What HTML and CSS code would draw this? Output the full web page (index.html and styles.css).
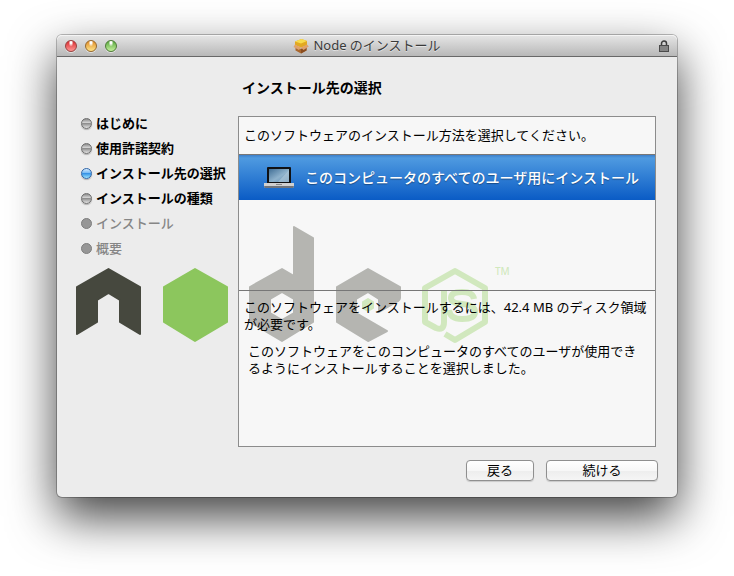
FILE: index.html
```html
<!DOCTYPE html>
<html lang="ja">
<head>
<meta charset="utf-8">
<title>Node のインストール</title>
<link rel="stylesheet" href="styles.css">
</head>
<body>
<main class="window">
  <header class="titlebar">
    <div class="lights">
      <button class="light red" aria-label="閉じる"></button>
      <button class="light amber" aria-label="しまう"></button>
      <button class="light green" aria-label="拡大"></button>
    </div>
    <h1 class="title">
      <svg class="package" viewBox="0 0 16 16" aria-hidden="true">
        <path d="M2.500 8l5.500 3 5.500-3v4.500L8 15.500l-5.500-3z" fill="#a9662c"/>
        <path d="M8 11l5.500-3v4.500L8 15.500z" fill="#8a4d20"/>
        <path d="M2 3.500L8.500 1 14 3v4.500L8 9.500 2 7z" fill="#e2a922"/>
        <path d="M2 3.500L8.500 1 14 3 8 5.500z" fill="#f7dc4e"/>
        <path d="M2 6.500L.5 9l5.500 3 2-2.500zM14 6.500L15.800 8.500 10.500 12 8 9.500z" fill="#e0a26a"/>
      </svg>
      <span>Node のインストール</span>
    </h1>
    <button class="lock" aria-label="証明書">
      <svg viewBox="0 0 10 12" aria-hidden="true">
        <path d="M2.500 6V3.500a2.500 2.500 0 0 1 5 0V6" fill="none" stroke="#3e3e3e" stroke-width="1.500"/>
        <rect x=".5" y="5.500" width="9" height="6" fill="#858585" stroke="#4b4b4b"/>
      </svg>
    </button>
  </header>
  <div class="content">
    <svg class="brand" viewBox="0 0 440 120" aria-hidden="true">
      <g fill="#46483e" stroke="#46483e" stroke-width="2" stroke-linejoin="round">
        <path d="M2 63L33.500 45 65 63v47l-20-12V76l-11.500-7L22 76v22L2 110z"/>
        <path fill-rule="evenodd" d="M175 63l32-18 12 7V3l19 11v84l-31 19-32-19zM195 75v14l12 7 12-7V75l-12-7z"/>
        <path d="M262 63l31-18 32 18v11q0 2-2 3l-19 11V75l-11-7-12 7v14l31 18-19 10-31-19z"/>
      </g>
      <g fill="#8cc65d" stroke="#8cc65d" stroke-width="2" stroke-linejoin="round">
        <path d="M89 63l31-18 32 18v35l-32 19-31-19z"/>
        <path d="M288 78l5-3 5 3v6l-5 3-5-3z"/>
      </g>
      <g fill="none" stroke="#8cc65d" stroke-width="6" stroke-linejoin="round">
        <path d="M370 110l10 6 30-18V64l-30-17-30 17v34l11 6q8 3 8-6V66"/>
        <path d="M399 75q-1-7-12-7-11 0-11 6 0 5 11 6 13 1 13 8 0 7-13 7-12 0-13-9"/>
      </g>
      <text class="mark" x="420" y="51">TM</text>
    </svg>
    <nav class="sidebar" aria-label="手順">
      <ol class="steps">
        <li class="step">はじめに</li>
        <li class="step">使用許諾契約</li>
        <li class="step current" aria-current="step">インストール先の選択</li>
        <li class="step">インストールの種類</li>
        <li class="step pending">インストール</li>
        <li class="step pending">概要</li>
      </ol>
    </nav>
    <section class="pane">
      <h2 class="heading">インストール先の選択</h2>
      <div class="panel">
        <p class="prompt">このソフトウェアのインストール方法を選択してください。</p>
        <div class="choices">
          <button class="choice" aria-pressed="true">
            <svg class="laptop" viewBox="0 0 30 22" aria-hidden="true">
              <defs>
                <linearGradient id="screen" x1="0" y1="0" x2="1" y2="1">
                  <stop offset="0" stop-color="#416f96"/>
                  <stop offset=".55" stop-color="#8fb2cc"/>
                  <stop offset="1" stop-color="#5b88ad"/>
                </linearGradient>
              </defs>
              <rect x="3" y="0" width="24" height="17" rx="1" fill="#101114"/>
              <rect x="5" y="2" width="20" height="13" fill="url(#screen)"/>
              <path d="M14 15L25 3v12z" fill="#b4cbdc" opacity=".6"/>
              <path d="M0 16h30v3l-1 2H1l-1-2z" fill="#d0d0d0"/>
              <path d="M0 19h30l-1 2H1z" fill="#6f747c"/>
              <path d="M12 17h6v1h-6z" fill="#888"/>
            </svg>
            <span>このコンピュータのすべてのユーザ用にインストール</span>
          </button>
        </div>
        <div class="details">
          <p>このソフトウェアをインストールするには、42.4 MB のディスク領域が必要です。</p>
          <p class="note">このソフトウェアをこのコンピュータのすべてのユーザが使用できるようにインストールすることを選択しました。</p>
        </div>
      </div>
      <div class="actions">
        <button class="push">戻る</button>
        <button class="push primary">続ける</button>
      </div>
    </section>
  </div>
</main>
</body>
</html>
```

FILE: styles.css
```css
* {
  box-sizing: border-box;
}

body {
  margin: 0;
  padding: 35px 57px 79px;
  background: #fff;
  color: #000;
  font: 13px/17px "Noto Sans", "Noto Sans CJK JP", sans-serif;
}

h1,
h2,
p,
ol {
  margin: 0;
  padding: 0;
}

button {
  padding: 0;
  border: 0;
  color: inherit;
  font: inherit;
}

.window {
  border-radius: 5px;
  background: #ececec;
  box-shadow: 0 0 0 1px rgba(0, 0, 0, 0.25), 0 20px 48px rgba(0, 0, 0, 0.75);
}

.titlebar {
  display: grid;
  grid-template-columns: 1fr auto 1fr;
  align-items: center;
  height: 22px;
  padding: 0 8px;
  border-bottom: 1px solid #686868;
  border-radius: 5px 5px 0 0;
  background: linear-gradient(#e6e6e6, #b8b8b8);
  box-shadow: inset 0 1px #f4f4f4;
}

.lights {
  display: flex;
  gap: 8px;
}

.light {
  width: 12px;
  height: 12px;
  border: 1px solid;
  border-radius: 50%;
  box-shadow: 0 1px rgba(255, 255, 255, 0.5);
}

.red {
  border-color: #98413f;
  background: radial-gradient(ellipse at 50% 15%, #fff 0 10%, transparent 35%), linear-gradient(#d9292d, #ff9794);
}

.amber {
  border-color: #96682c;
  background: radial-gradient(ellipse at 50% 15%, #fff 0 10%, transparent 35%), linear-gradient(#e08b26, #ffe58a);
}

.green {
  border-color: #4e7b37;
  background: radial-gradient(ellipse at 50% 15%, #fff 0 10%, transparent 35%), linear-gradient(#57a63c, #c5f19e);
}

.title {
  display: flex;
  align-items: center;
  gap: 4px;
  color: #3a3a3a;
  font-size: 13px;
  font-weight: 400;
  text-shadow: 0 1px rgba(255, 255, 255, 0.5);
}

.package {
  width: 16px;
  height: 16px;
}

.lock {
  justify-self: end;
  width: 10px;
  height: 12px;
  background: none;
}

.lock svg {
  display: block;
}

.content {
  position: relative;
  display: grid;
  grid-template-columns: 181px 1fr;
  min-height: 440px;
}

.brand {
  position: absolute;
  top: 167px;
  left: 18px;
  width: 440px;
  height: 120px;
}

.mark {
  fill: #8cc65d;
  font-size: 10px;
  font-weight: 500;
}

.sidebar,
.pane {
  position: relative;
}

.sidebar {
  padding: 54px 0 0 24px;
}

.steps {
  list-style: none;
}

.step {
  display: flex;
  align-items: center;
  gap: 4px;
  height: 25px;
  font-weight: 700;
  white-space: nowrap;
}

.step::before {
  content: "";
  width: 9px;
  height: 9px;
  border: 1px solid #6e6e6e;
  border-radius: 50%;
  background: linear-gradient(#8b8b8b, #d2d2d2 40%, #8f8f8f 50%, #e2e2e2);
  box-shadow: 0 1px 1px rgba(0, 0, 0, 0.25);
}

.current::before {
  border-color: #2f65a8;
  background: linear-gradient(#d2eaff, #7fbef5 40%, #3793e6 50%, #9be4ff);
}

.pending {
  color: #868686;
  font-weight: 500;
}

.pending::before {
  border-color: #7e7e7e;
  background: #969696;
  box-shadow: none;
}

.pane {
  display: flex;
  flex-direction: column;
  padding: 22px 19px 16px 0;
}

.heading {
  padding-left: 4px;
  font-size: 14px;
  line-height: 17px;
}

.panel {
  flex: 1;
  display: flex;
  flex-direction: column;
  margin: 20px 2px 13px 0;
  border: 1px solid #8c8c8c;
  background: rgba(255, 255, 255, 0.6);
}

.prompt {
  padding: 10px 5px;
  border-bottom: 1px solid #777;
}

.choices {
  height: 136px;
  border-bottom: 1px solid #777;
}

.choice {
  display: flex;
  align-items: center;
  gap: 11px;
  width: 100%;
  height: 45px;
  padding-left: 25px;
  background: linear-gradient(#3d7fc9, #4f9ae0 3px, #0a5bc5);
  color: #fff;
  font-size: 14px;
  font-weight: 500;
  text-align: left;
  text-shadow: 0 1px 1px rgba(0, 0, 0, 0.35);
  white-space: nowrap;
}

.laptop {
  width: 30px;
  height: 22px;
}

.details {
  padding: 8px 5px;
}

.note {
  padding: 10px 4px 0;
}

.actions {
  display: flex;
  justify-content: flex-end;
  gap: 12px;
}

.push {
  width: 68px;
  height: 21px;
  border: 1px solid #8f8f8f;
  border-radius: 4px;
  background: linear-gradient(#fff, #f7f7f7 50%, #ededed 50%, #f5f5f5);
  box-shadow: 0 1px 1px rgba(0, 0, 0, 0.15);
}

.primary {
  width: 112px;
}
```
